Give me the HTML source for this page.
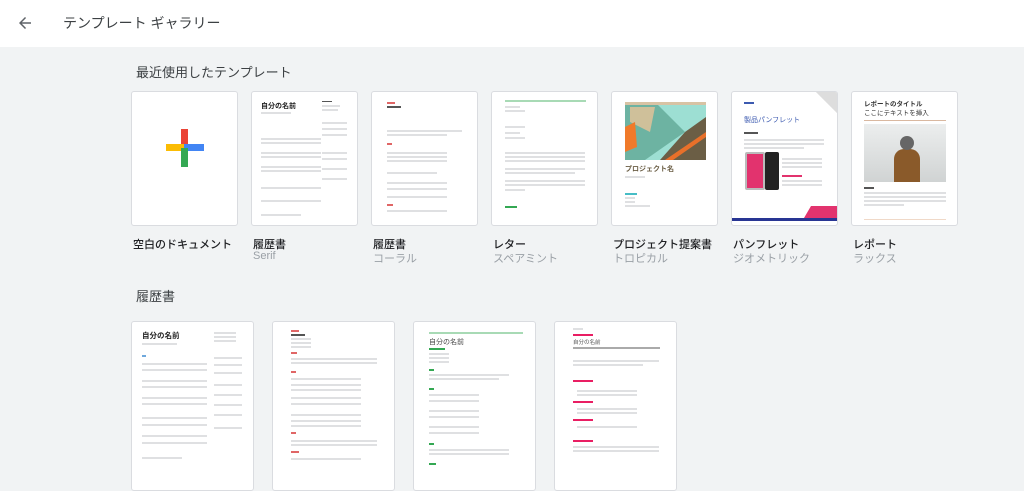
<!DOCTYPE html>
<html><head><meta charset="utf-8"><style>
*{margin:0;padding:0;box-sizing:border-box}
body{width:1024px;height:484px;overflow:hidden;background:#f1f3f4;font-family:"Liberation Sans","Noto Sans CJK JP",sans-serif;position:relative;color:#3c4043}
.hdr{position:absolute;left:0;top:0;width:1024px;height:47px;background:#fff}
.abs{position:absolute}
.card{position:absolute;background:#fff;border:1px solid #dadce0;border-radius:3px;overflow:hidden}
.l{position:absolute;height:2px;background:#dfe0e2}
.d{position:absolute;height:2px;background:#555}
.t{position:absolute;font-size:11px;color:#202124;font-weight:500;white-space:nowrap}
.s{position:absolute;font-size:11px;color:#9aa0a6;white-space:nowrap}
</style></head><body>
<div class="hdr">
<svg class="abs" style="left:16px;top:14px" width="18" height="18" viewBox="0 0 24 24"><path d="M20 11H7.8l5.6-5.6L12 4l-8 8 8 8 1.4-1.4L7.8 13H20z" fill="#5f6368"/></svg>
<div class="abs" style="left:63px;top:13px;font-size:14px;color:#3c4043">テンプレート ギャラリー</div>
</div>
<div class="abs" style="left:136px;top:62px;font-size:13px;color:#3c4043">最近使用したテンプレート</div>

<div class="card" style="left:131px;top:91px;width:107px;height:135px">
<div class="abs" style="left:49px;top:37px;width:7px;height:19px;background:#ea4335"></div>
<div class="abs" style="left:34px;top:52px;width:19px;height:7px;background:#fbbc04"></div>
<div class="abs" style="left:52px;top:52px;width:20px;height:7px;background:#4285f4"></div>
<div class="abs" style="left:49px;top:56px;width:7px;height:19px;background:#34a853"></div>
</div>
<div class="card" style="left:251px;top:91px;width:107px;height:135px">
<div class="abs" style="left:9px;top:9px;font-size:7px;font-weight:bold;color:#222">自分の名前</div>
<div class="l" style="left:9px;top:20px;width:30px"></div>
<div class="d" style="left:70px;top:9px;width:10px;height:1px"></div><div class="l" style="left:70px;top:13px;width:18px"></div><div class="l" style="left:70px;top:17px;width:16px"></div>
<div class="l" style="left:9px;width:60px;top:46px"></div><div class="l" style="left:9px;top:50px;width:60px"></div><div class="l" style="left:9px;top:60px;width:60px"></div><div class="l" style="left:9px;top:64px;width:60px"></div><div class="l" style="left:9px;top:74px;width:60px"></div><div class="l" style="left:9px;top:78px;width:60px"></div><div class="l" style="left:9px;top:95px;width:60px"></div><div class="l" style="left:9px;top:108px;width:60px"></div><div class="l" style="left:9px;top:122px;width:40px"></div>
<div class="l" style="left:70px;top:30px;width:25px"></div><div class="l" style="left:70px;top:36px;width:25px"></div><div class="l" style="left:70px;top:42px;width:25px"></div><div class="l" style="left:70px;top:60px;width:25px"></div><div class="l" style="left:70px;top:66px;width:25px"></div><div class="l" style="left:70px;top:76px;width:25px"></div><div class="l" style="left:70px;top:86px;width:25px"></div>
</div>
<div class="card" style="left:371px;top:91px;width:107px;height:135px">
<div class="abs" style="left:15px;top:10px;width:8px;height:2px;background:#e06666"></div>
<div class="d" style="left:15px;top:14px;width:14px"></div>
<div class="l" style="left:15px;top:38px;width:75px"></div><div class="l" style="left:15px;top:42px;width:60px"></div>
<div class="abs" style="left:15px;top:51px;width:5px;height:2px;background:#e06666"></div>
<div class="l" style="left:15px;top:60px;width:60px"></div><div class="l" style="left:15px;top:64px;width:60px"></div><div class="l" style="left:15px;top:68px;width:60px"></div><div class="l" style="left:15px;top:80px;width:50px"></div><div class="l" style="left:15px;top:90px;width:60px"></div><div class="l" style="left:15px;top:96px;width:60px"></div><div class="l" style="left:15px;top:104px;width:60px"></div><div class="l" style="left:15px;top:118px;width:60px"></div>
<div class="abs" style="left:15px;top:112px;width:6px;height:2px;background:#e06666"></div>
</div>
<div class="card" style="left:491px;top:91px;width:107px;height:135px">
<div class="abs" style="left:13px;top:8px;width:81px;height:2px;background:#a8dab5"></div>
<div class="l" style="left:13px;top:14px;width:15px"></div><div class="l" style="left:13px;top:18px;width:20px"></div><div class="l" style="left:13px;top:34px;width:20px"></div><div class="l" style="left:13px;top:40px;width:15px"></div><div class="l" style="left:13px;top:45px;width:20px"></div>
<div class="l" style="left:13px;top:60px;width:80px"></div><div class="l" style="left:13px;top:64px;width:80px"></div><div class="l" style="left:13px;top:68px;width:80px"></div><div class="l" style="left:13px;top:76px;width:80px"></div><div class="l" style="left:13px;top:80px;width:70px"></div><div class="l" style="left:13px;top:88px;width:80px"></div><div class="l" style="left:13px;top:92px;width:80px"></div><div class="l" style="left:13px;top:97px;width:20px"></div>
<div class="abs" style="left:13px;top:114px;width:12px;height:2px;background:#34a853"></div>
</div>
<div class="card" style="left:611px;top:91px;width:107px;height:135px">
<svg class="abs" style="left:13px;top:10px" width="81" height="58"><rect width="81" height="58" fill="#9ddfd3"/><polygon points="0,0 30,0 60,30 20,58 0,58" fill="#6db3a2"/><polygon points="5,5 30,5 25,30 5,20" fill="#cfc09a"/><polygon points="60,30 81,15 81,58 35,58" fill="#6b5e45"/><polygon points="0,25 10,20 12,45 0,50" fill="#f07a2a"/><polygon points="40,58 81,30 81,35 48,58" fill="#e8702a"/><rect width="81" height="3" fill="#d8c3a4"/></svg>
<div class="abs" style="left:13px;top:72px;font-size:7px;font-weight:bold;color:#6b5e45">プロジェクト名</div>
<div class="l" style="left:13px;top:84px;width:20px"></div>
<div class="abs" style="left:13px;top:101px;width:12px;height:2px;background:#46bdc6"></div>
<div class="l" style="left:13px;top:105px;width:10px"></div><div class="l" style="left:13px;top:109px;width:10px"></div><div class="l" style="left:13px;top:113px;width:25px"></div>
</div>
<div class="card" style="left:731px;top:91px;width:107px;height:135px">
<div class="abs" style="left:80px;top:0;width:27px;height:30px;background:linear-gradient(225deg,#ddd 40%,#fff 41%)"></div>
<div class="abs" style="left:12px;top:10px;width:10px;height:2px;background:#3c5ab0"></div>
<div class="abs" style="left:12px;top:23px;font-size:7px;color:#3c5ab0">製品パンフレット</div>
<div class="d" style="left:12px;top:40px;width:14px"></div>
<div class="l" style="left:12px;top:47px;width:80px"></div><div class="l" style="left:12px;top:51px;width:80px"></div><div class="l" style="left:12px;top:55px;width:60px"></div>
<div class="abs" style="left:13px;top:60px;width:20px;height:38px;background:#e2336e;border:2px solid #bbb;border-radius:2px"></div>
<div class="abs" style="left:33px;top:60px;width:14px;height:38px;background:#222;border-radius:2px"></div>
<div class="l" style="left:50px;top:66px;width:40px"></div><div class="l" style="left:50px;top:70px;width:40px"></div><div class="l" style="left:50px;top:74px;width:40px"></div><div class="abs" style="left:50px;top:83px;width:20px;height:2px;background:#e2336e"></div><div class="l" style="left:50px;top:88px;width:40px"></div><div class="l" style="left:50px;top:92px;width:40px"></div>
<div class="abs" style="left:72px;top:114px;width:35px;height:12px;background:#e2336e;clip-path:polygon(20% 0,100% 0,100% 100%,0 100%)"></div>
<div class="abs" style="left:0;top:126px;width:107px;height:3px;background:#283593"></div>
</div>
<div class="card" style="left:851px;top:91px;width:107px;height:135px">
<div class="abs" style="left:12px;top:6px;font-size:6.5px;font-weight:bold;color:#333">レポートのタイトル</div>
<div class="abs" style="left:12px;top:15px;font-size:6.5px;color:#333">ここにテキストを挿入</div>
<div class="abs" style="left:12px;top:28px;width:82px;height:1px;background:#d9b8a0"></div>
<div class="abs" style="left:12px;top:32px;width:82px;height:58px;background:linear-gradient(#eceeee,#d0d3d3)"><div class="abs" style="left:30px;top:25px;width:26px;height:33px;background:#8a5a2a;border-radius:10px 10px 0 0"></div><div class="abs" style="left:36px;top:12px;width:14px;height:14px;background:#666;border-radius:50%"></div></div>
<div class="d" style="left:12px;top:95px;width:10px"></div>
<div class="l" style="left:12px;top:100px;width:82px"></div><div class="l" style="left:12px;top:104px;width:82px"></div><div class="l" style="left:12px;top:108px;width:82px"></div><div class="l" style="left:12px;top:112px;width:40px"></div>
<div class="abs" style="left:12px;top:127px;width:82px;height:1px;background:#f0d9c8"></div>
</div>

<div class="t" style="left:133px;top:236px">空白のドキュメント</div>
<div class="t" style="left:253px;top:236px">履歴書</div><div class="s" style="left:253px;top:250px">Serif</div>
<div class="t" style="left:373px;top:236px">履歴書</div><div class="s" style="left:373px;top:250px">コーラル</div>
<div class="t" style="left:493px;top:236px">レター</div><div class="s" style="left:493px;top:250px">スペアミント</div>
<div class="t" style="left:613px;top:236px">プロジェクト提案書</div><div class="s" style="left:613px;top:250px">トロピカル</div>
<div class="t" style="left:733px;top:236px">パンフレット</div><div class="s" style="left:733px;top:250px">ジオメトリック</div>
<div class="t" style="left:853px;top:236px">レポート</div><div class="s" style="left:853px;top:250px">ラックス</div>

<div class="abs" style="left:136px;top:286px;font-size:13px;color:#3c4043">履歴書</div>

<div class="card" style="left:131px;top:321px;width:123px;height:170px">
<div class="abs" style="left:10px;top:8px;font-size:7.5px;font-weight:bold;color:#222">自分の名前</div>
<div class="l" style="left:10px;top:21px;width:35px"></div>
<div class="l" style="left:82px;top:10px;width:22px"></div><div class="l" style="left:82px;top:14px;width:22px"></div><div class="l" style="left:82px;top:18px;width:22px"></div>
<div class="abs" style="left:10px;top:33px;width:4px;height:2px;background:#6fa8dc"></div>
<div class="l" style="left:10px;top:41px;width:65px"></div><div class="l" style="left:10px;top:47px;width:65px"></div><div class="l" style="left:10px;top:58px;width:65px"></div><div class="l" style="left:10px;top:64px;width:65px"></div><div class="l" style="left:10px;top:75px;width:65px"></div><div class="l" style="left:10px;top:81px;width:65px"></div><div class="l" style="left:10px;top:95px;width:65px"></div><div class="l" style="left:10px;top:102px;width:65px"></div><div class="l" style="left:10px;top:113px;width:65px"></div><div class="l" style="left:10px;top:120px;width:65px"></div><div class="l" style="left:10px;top:135px;width:40px"></div>
<div class="l" style="left:82px;top:35px;width:28px"></div><div class="l" style="left:82px;top:42px;width:28px"></div><div class="l" style="left:82px;top:50px;width:28px"></div><div class="l" style="left:82px;top:62px;width:28px"></div><div class="l" style="left:82px;top:72px;width:28px"></div><div class="l" style="left:82px;top:82px;width:28px"></div><div class="l" style="left:82px;top:92px;width:28px"></div><div class="l" style="left:82px;top:105px;width:28px"></div>
</div>
<div class="card" style="left:272px;top:321px;width:123px;height:170px">
<div class="abs" style="left:18px;top:8px;width:8px;height:2px;background:#e06666"></div><div class="d" style="left:18px;top:12px;width:14px"></div>
<div class="l" style="left:18px;top:16px;width:20px"></div><div class="l" style="left:18px;top:20px;width:20px"></div><div class="l" style="left:18px;top:24px;width:20px"></div>
<div class="abs" style="left:18px;top:30px;width:6px;height:2px;background:#e06666"></div>
<div class="l" style="left:18px;top:36px;width:86px"></div><div class="l" style="left:18px;top:40px;width:86px"></div>
<div class="abs" style="left:18px;top:49px;width:5px;height:2px;background:#e06666"></div>
<div class="l" style="left:18px;top:56px;width:70px"></div><div class="l" style="left:18px;top:62px;width:70px"></div><div class="l" style="left:18px;top:67px;width:70px"></div><div class="l" style="left:18px;top:75px;width:70px"></div><div class="l" style="left:18px;top:81px;width:70px"></div><div class="l" style="left:18px;top:92px;width:70px"></div><div class="l" style="left:18px;top:98px;width:70px"></div><div class="l" style="left:18px;top:103px;width:70px"></div>
<div class="abs" style="left:18px;top:110px;width:5px;height:2px;background:#e06666"></div>
<div class="l" style="left:18px;top:118px;width:86px"></div><div class="l" style="left:18px;top:122px;width:86px"></div>
<div class="abs" style="left:18px;top:129px;width:8px;height:2px;background:#e06666"></div>
<div class="l" style="left:18px;top:136px;width:70px"></div>
</div>
<div class="card" style="left:413px;top:321px;width:123px;height:170px">
<div class="abs" style="left:15px;top:10px;width:94px;height:2px;background:#a8dab5"></div>
<div class="abs" style="left:15px;top:15px;font-size:7px;color:#444">自分の名前</div>
<div class="abs" style="left:15px;top:26px;width:16px;height:2px;background:#34a853"></div>
<div class="l" style="left:15px;top:31px;width:20px"></div><div class="l" style="left:15px;top:35px;width:20px"></div><div class="l" style="left:15px;top:39px;width:20px"></div>
<div class="abs" style="left:15px;top:47px;width:5px;height:2px;background:#34a853"></div>
<div class="l" style="left:15px;top:52px;width:80px"></div><div class="l" style="left:15px;top:56px;width:70px"></div>
<div class="abs" style="left:15px;top:66px;width:5px;height:2px;background:#34a853"></div>
<div class="l" style="left:15px;top:72px;width:50px"></div><div class="l" style="left:15px;top:78px;width:50px"></div><div class="l" style="left:15px;top:88px;width:50px"></div><div class="l" style="left:15px;top:94px;width:50px"></div><div class="l" style="left:15px;top:104px;width:50px"></div><div class="l" style="left:15px;top:110px;width:50px"></div>
<div class="abs" style="left:15px;top:121px;width:5px;height:2px;background:#34a853"></div>
<div class="l" style="left:15px;top:127px;width:80px"></div><div class="l" style="left:15px;top:131px;width:80px"></div>
<div class="abs" style="left:15px;top:141px;width:7px;height:2px;background:#34a853"></div>
</div>
<div class="card" style="left:554px;top:321px;width:123px;height:170px">
<div class="l" style="left:18px;top:6px;width:10px"></div><div class="abs" style="left:18px;top:12px;width:20px;height:2px;background:#e91e63"></div>
<div class="abs" style="left:18px;top:16px;font-size:5.5px;color:#555">自分の名前</div>
<div class="abs" style="left:18px;top:25px;width:87px;height:2px;background:#aaa"></div>
<div class="l" style="left:18px;top:38px;width:86px"></div><div class="l" style="left:18px;top:42px;width:70px"></div>
<div class="abs" style="left:18px;top:58px;width:20px;height:2px;background:#e91e63"></div>
<div class="l" style="left:22px;top:68px;width:60px"></div><div class="l" style="left:22px;top:72px;width:60px"></div>
<div class="abs" style="left:18px;top:79px;width:20px;height:2px;background:#e91e63"></div>
<div class="l" style="left:22px;top:86px;width:60px"></div><div class="l" style="left:22px;top:90px;width:60px"></div>
<div class="abs" style="left:18px;top:97px;width:20px;height:2px;background:#e91e63"></div>
<div class="l" style="left:22px;top:104px;width:60px"></div>
<div class="abs" style="left:18px;top:118px;width:20px;height:2px;background:#e91e63"></div>
<div class="l" style="left:18px;top:124px;width:86px"></div><div class="l" style="left:18px;top:128px;width:86px"></div>
</div>
</body></html>
